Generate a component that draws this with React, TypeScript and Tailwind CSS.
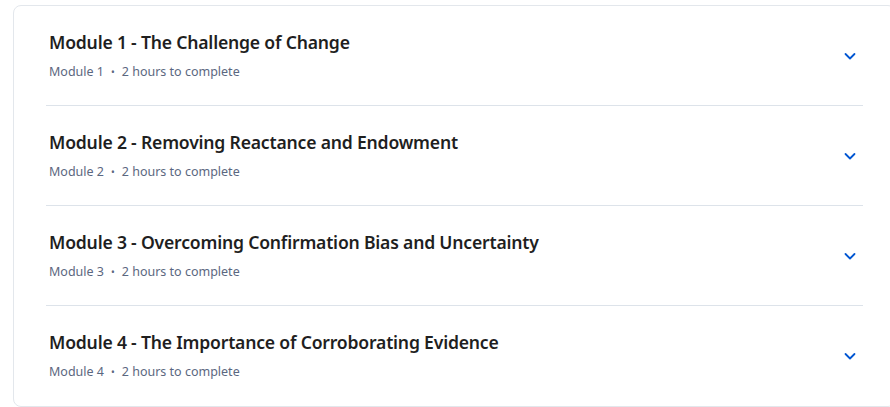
const modules = [
  "Module 1 - The Challenge of Change",
  "Module 2 - Removing Reactance and Endowment",
  "Module 3 - Overcoming Confirmation Bias and Uncertainty",
  "Module 4 - The Importance of Corroborating Evidence",
];

function Chevron() {
  return (
    <svg width="24" height="24" viewBox="0 0 24 24" fill="none" className="text-[#0056d2]">
      <path d="M7.5 10l4.5 4.5 4.5-4.5" stroke="currentColor" strokeWidth="1.8" strokeLinecap="round" strokeLinejoin="round" />
    </svg>
  );
}

export default function App() {
  return (
    <div className="min-h-screen bg-white pt-[5px] pl-[13px] font-['Noto_Sans',sans-serif]">
      <div className="w-[883px] rounded-lg border border-[#e3e7ec] px-8">
        {modules.map((title, i) => (
          <div
            key={title}
            className={`flex h-[100px] items-center ${i < modules.length - 1 ? "border-b border-[#dde3ea]" : ""}`}
          >
            <div className="flex-1 pl-[3px]">
              <h3 className="text-[17.6px] font-semibold leading-6 tracking-[-0.2px] text-[#1f1f1f]">{title}</h3>
              <div className="mt-[9px] flex items-center text-[12.5px] text-[#5b6780]">
                <span>Module {i + 1}</span>
                <span className="mx-[7px] text-[10px]">•</span>
                <span>2 hours to complete</span>
              </div>
            </div>
            <div className="mr-[1px]">
              <Chevron />
            </div>
          </div>
        ))}
      </div>
    </div>
  );
}
